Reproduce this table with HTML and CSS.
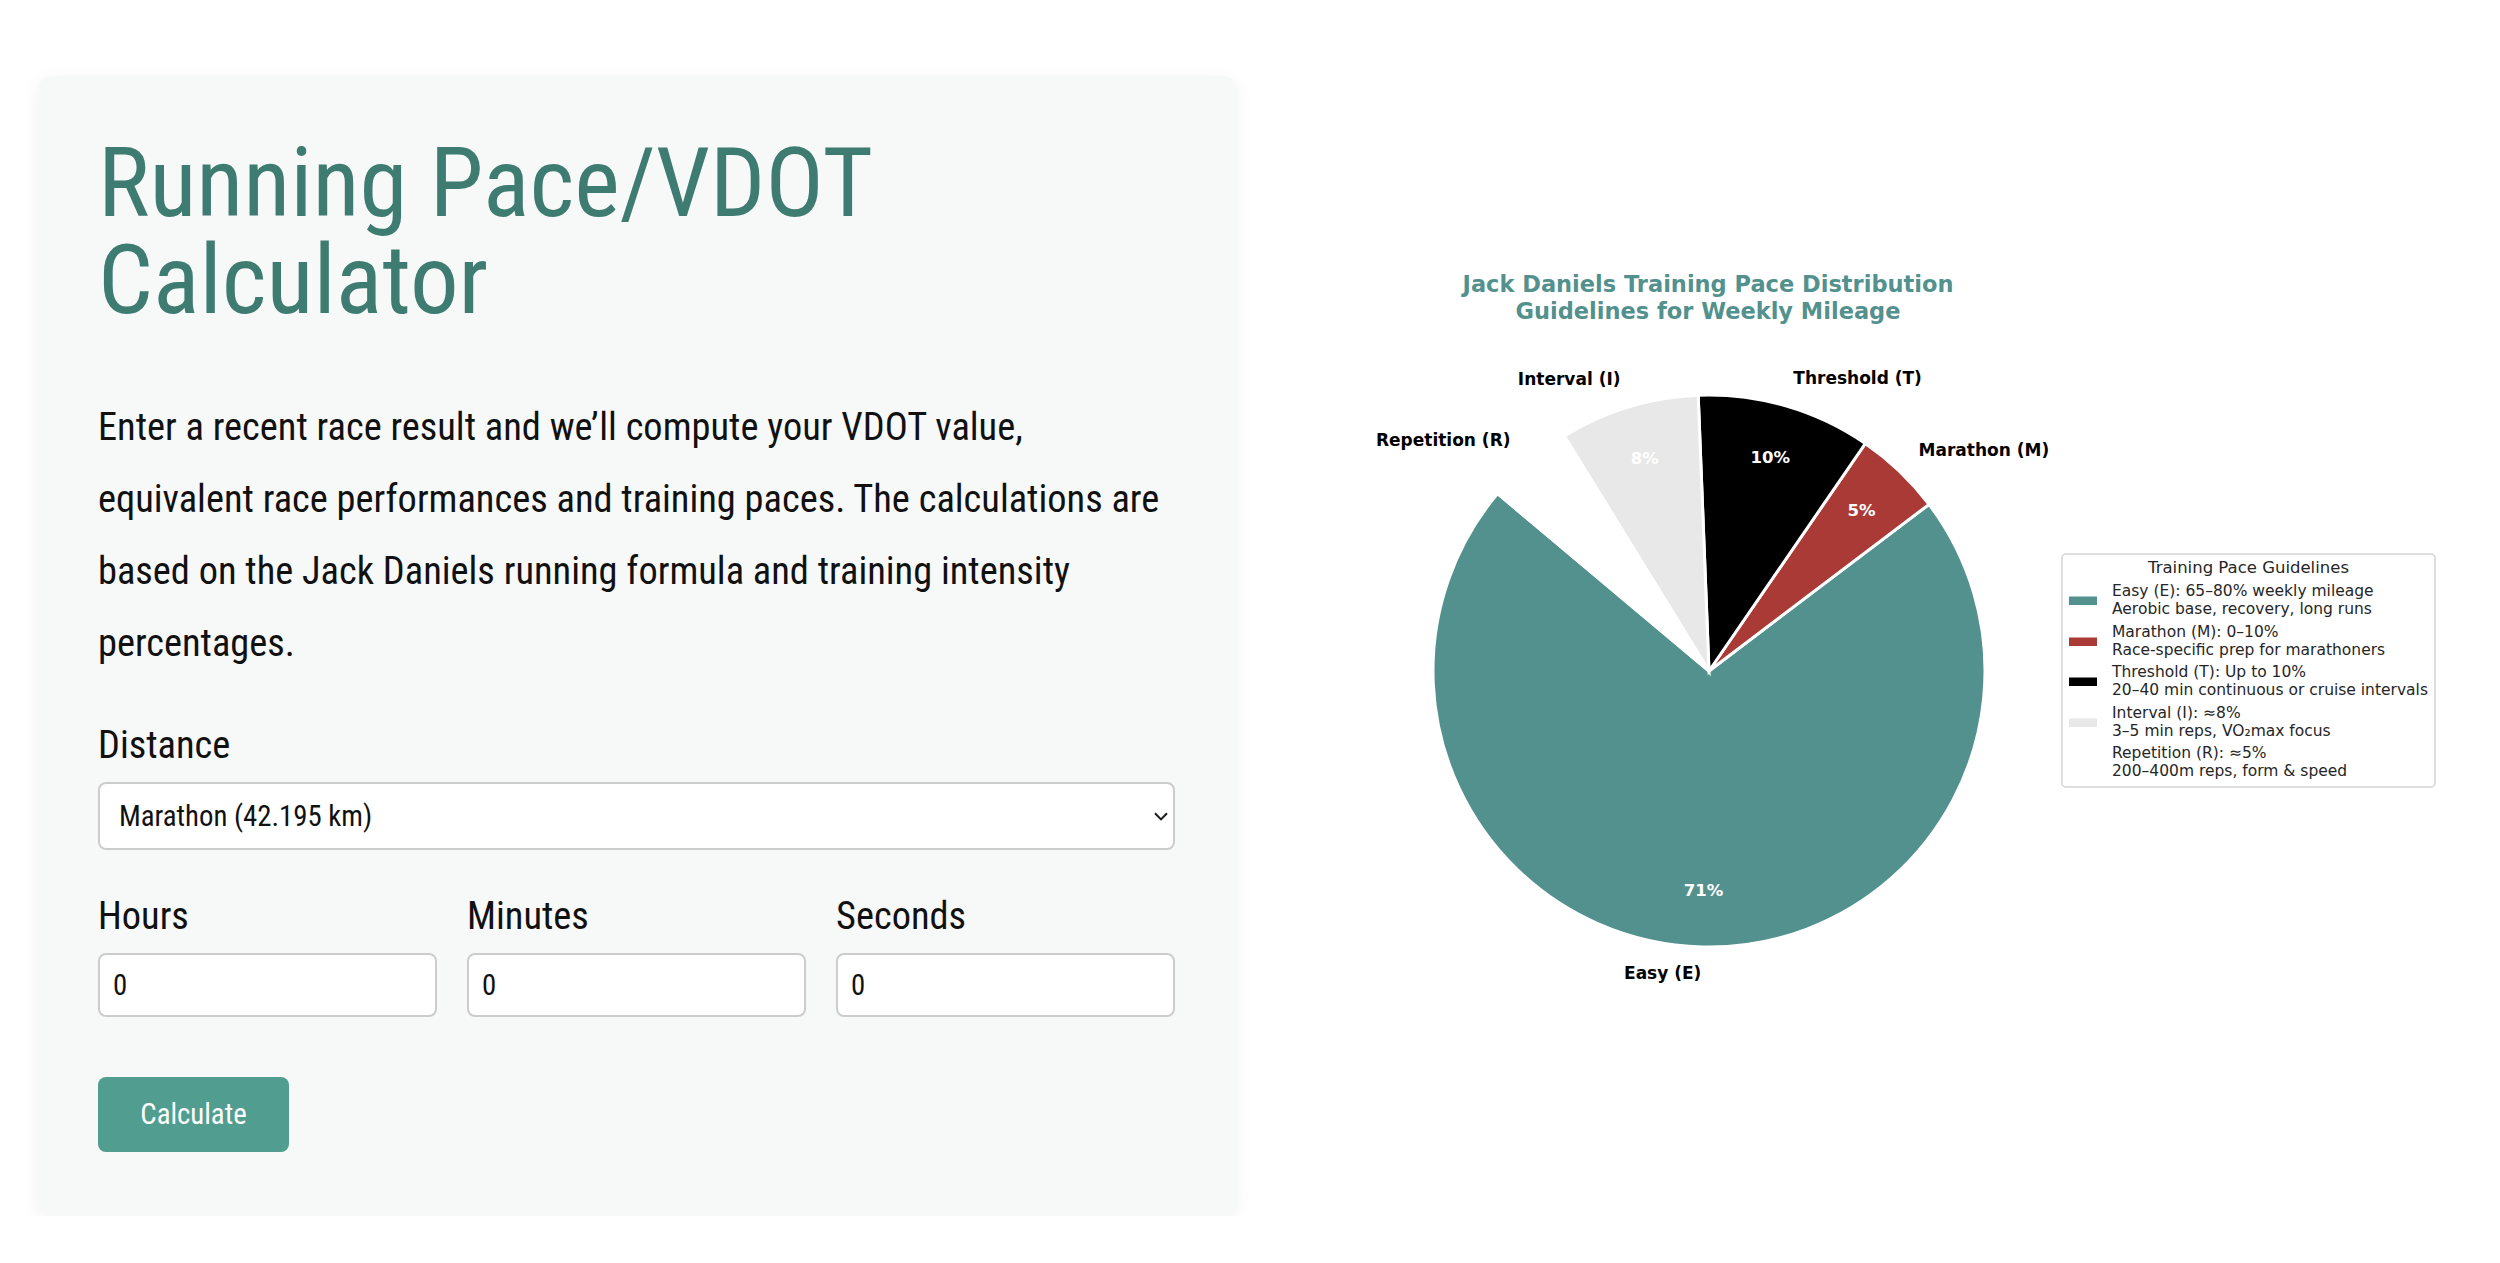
FILE: index.html
```html
<!DOCTYPE html>
<html lang="en">
<head>
<meta charset="utf-8">
<title>Running Pace/VDOT Calculator</title>
<link rel="stylesheet" href="styles.css">
</head>
<body>
<div class="page">
  <section class="card">
    <h1 class="title">Running Pace/VDOT Calculator</h1>
    <p class="intro">Enter a recent race result and we’ll compute your VDOT value, equivalent race performances and training paces. The calculations are based on the Jack Daniels running formula and training intensity percentages.</p>
    <label class="field-label" for="distance">Distance</label>
    <div class="select-wrap">
      <select class="select" id="distance">
        <option>Marathon (42.195 km)</option>
      </select>
      <svg class="chevron" width="14" height="9" viewBox="0 0 14 9"><path d="M1 1.2 L7 7.4 L13 1.2" fill="none" stroke="#1a1a1a" stroke-width="2"/></svg>
    </div>
    <div class="time-row">
      <div class="time-field">
        <label class="field-label" for="hours">Hours</label>
        <input class="input" id="hours" type="text" value="0">
      </div>
      <div class="time-field">
        <label class="field-label" for="minutes">Minutes</label>
        <input class="input" id="minutes" type="text" value="0">
      </div>
      <div class="time-field">
        <label class="field-label" for="seconds">Seconds</label>
        <input class="input" id="seconds" type="text" value="0">
      </div>
    </div>
    <button class="button" type="button">Calculate</button>
  </section>

  <svg class="chart" width="1263" height="1000" viewBox="1237 76 1263 1000" xmlns="http://www.w3.org/2000/svg">
    <text class="chart-title" x="1708" y="292" text-anchor="middle">Jack Daniels Training Pace Distribution</text>
    <text class="chart-title" x="1708" y="319" text-anchor="middle">Guidelines for Weekly Mileage</text>

    <g class="wedges">
      <path d="M1709 671 L1497.57 493.59 A276 276 0 1 0 1929.01 504.35 Z" fill="#52918d"/>
      <path d="M1709 671 L1929.01 504.35 A276 276 0 0 0 1865.30 443.52 Z" fill="#a93a36"/>
      <path d="M1709 671 L1865.30 443.52 A276 276 0 0 0 1698.19 395.21 Z" fill="#000000"/>
      <path d="M1709 671 L1698.19 395.21 A276 276 0 0 0 1564.25 436.00 Z" fill="#e8e8e8"/>
      <path d="M1709 671 L1564.25 436.00 A276 276 0 0 0 1497.57 493.59 Z" fill="#ffffff"/>
    </g>

    <text class="slice-label" x="1701.4" y="979" text-anchor="end">Easy (E)</text>
    <text class="slice-label" x="1918.6" y="456" text-anchor="start">Marathon (M)</text>
    <text class="slice-label" x="1793.3" y="384" text-anchor="start">Threshold (T)</text>
    <text class="slice-label" x="1620.5" y="385" text-anchor="end">Interval (I)</text>
    <text class="slice-label" x="1510.5" y="445.7" text-anchor="end">Repetition (R)</text>

    <text class="pct" x="1703.5" y="896" text-anchor="middle">71%</text>
    <text class="pct" x="1861.5" y="515.5" text-anchor="middle">5%</text>
    <text class="pct" x="1770.3" y="463" text-anchor="middle">10%</text>
    <text class="pct" x="1644.7" y="464" text-anchor="middle">8%</text>

    <g class="legend">
      <rect x="2062" y="554" width="373" height="233" rx="4" fill="#ffffff" stroke="#d4d4d4" stroke-width="1.5"/>
      <text class="legend-title" x="2248.5" y="573" text-anchor="middle">Training Pace Guidelines</text>

      <rect x="2069" y="596.5" width="28" height="8.5" fill="#52918d"/>
      <text class="legend-text" x="2112" y="596">Easy (E): 65–80% weekly mileage</text>
      <text class="legend-text" x="2112" y="613.5">Aerobic base, recovery, long runs</text>

      <rect x="2069" y="637.5" width="28" height="8.5" fill="#a93a36"/>
      <text class="legend-text" x="2112" y="637">Marathon (M): 0–10%</text>
      <text class="legend-text" x="2112" y="654.5">Race-specific prep for marathoners</text>

      <rect x="2069" y="677.5" width="28" height="8.5" fill="#000000"/>
      <text class="legend-text" x="2112" y="677">Threshold (T): Up to 10%</text>
      <text class="legend-text" x="2112" y="694.5">20–40 min continuous or cruise intervals</text>

      <rect x="2069" y="718.5" width="28" height="8.5" fill="#e8e8e8"/>
      <text class="legend-text" x="2112" y="718">Interval (I): ≈8%</text>
      <text class="legend-text" x="2112" y="735.5">3–5 min reps, VO₂max focus</text>

      <rect x="2069" y="758.5" width="28" height="8.5" fill="#ffffff"/>
      <text class="legend-text" x="2112" y="758">Repetition (R): ≈5%</text>
      <text class="legend-text" x="2112" y="775.5">200–400m reps, form &amp; speed</text>
    </g>
  </svg>
</div>
</body>
</html>
```

FILE: styles.css
```css
* {
  box-sizing: border-box;
}

html, body {
  margin: 0;
  padding: 0;
  background: #ffffff;
}

body {
  font-family: "Roboto Condensed", "Roboto", sans-serif;
  color: #111111;
  overflow: hidden;
}

.page {
  display: flex;
  align-items: flex-start;
  padding: 76px 0 0 38px;
}

.card {
  flex: none;
  width: 1199px;
  background: #f7f9f8;
  border-radius: 14px;
  box-shadow: 0 4px 18px rgba(0, 0, 0, 0.06);
  padding: 58.5px 62px 64px 60px;
}

.title {
  margin: 0;
  font-size: 97px;
  line-height: 97px;
  font-weight: 400;
  color: #3e7b71;
}

.intro {
  margin: 62px 0 0;
  font-size: 38.4px;
  line-height: 72px;
  color: #111111;
}

.field-label {
  display: block;
  margin: 43px 0 14px;
  font-size: 38.4px;
  line-height: 46px;
  color: #111111;
}

.select-wrap {
  position: relative;
}

.select {
  display: block;
  width: 100%;
  height: 68px;
  margin: 0;
  padding: 0 19px;
  appearance: none;
  -webkit-appearance: none;
  border: 2px solid #cccccc;
  border-radius: 8px;
  background: #ffffff;
  font-family: inherit;
  font-size: 28.8px;
  color: #111111;
}

.chevron {
  position: absolute;
  right: 7px;
  top: 30px;
}

.time-row {
  display: grid;
  grid-template-columns: repeat(3, 1fr);
  column-gap: 30px;
}

.input {
  display: block;
  width: 100%;
  height: 64px;
  margin: 0;
  padding: 0 13px;
  border: 2px solid #cccccc;
  border-radius: 8px;
  background: #ffffff;
  font-family: inherit;
  font-size: 28.8px;
  color: #111111;
}

.button {
  display: block;
  margin-top: 60px;
  width: 191px;
  height: 75px;
  padding: 0;
  border: none;
  border-radius: 8px;
  background: #519d8f;
  color: #ffffff;
  font-family: inherit;
  font-size: 28.8px;
}

.chart {
  flex: none;
  display: block;
}

.chart text {
  font-family: "DejaVu Sans", sans-serif;
}

.chart-title {
  font-size: 22.5px;
  font-weight: 700;
  fill: #52918d;
}

.wedges path {
  stroke: #ffffff;
  stroke-width: 3;
  stroke-linejoin: miter;
}

.slice-label {
  font-size: 17px;
  font-weight: 700;
  fill: #000000;
}

.pct {
  font-size: 16.5px;
  font-weight: 700;
  fill: #ffffff;
}

.legend-title {
  font-size: 16.5px;
  fill: #262626;
}

.legend-text {
  font-size: 15.5px;
  fill: #262626;
}
```
